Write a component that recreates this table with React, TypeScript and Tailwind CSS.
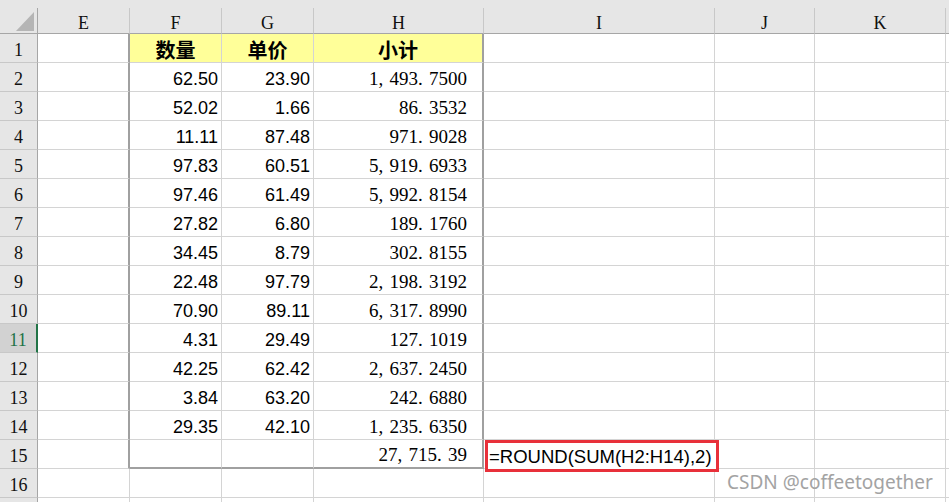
import React from "react";

const cols = ["E", "F", "G", "H", "I", "J", "K", ""];

const data: string[][] = [
  ["62.50", "23.90", "1,493.7500"],
  ["52.02", "1.66", "86.3532"],
  ["11.11", "87.48", "971.9028"],
  ["97.83", "60.51", "5,919.6933"],
  ["97.46", "61.49", "5,992.8154"],
  ["27.82", "6.80", "189.1760"],
  ["34.45", "8.79", "302.8155"],
  ["22.48", "97.79", "2,198.3192"],
  ["70.90", "89.11", "6,317.8990"],
  ["4.31", "29.49", "127.1019"],
  ["42.25", "62.42", "2,637.2450"],
  ["3.84", "63.20", "242.6880"],
  ["29.35", "42.10", "1,235.6350"],
  ["", "", "27,715.39"],
];

const gridCols =
  "grid grid-cols-[38px_92px_92px_92px_170px_231px_100px_131px_3px]";
const sans = "font-['Liberation_Sans',Arial,sans-serif]";
const serif = "font-['Liberation_Serif','Times_New_Roman',serif]";
const cell =
  "h-[29px] pt-[4px] border-r border-b border-[#d4d4d4] flex items-center";

// SimSun-style number: punctuation takes a wider slot
const SongNumber: React.FC<{ value: string }> = ({ value }) => (
  <span className={`${serif} text-[19px] text-black`}>
    {value.split("").map((ch, i) =>
      ch === "," || ch === "." ? (
        <span key={i} className="inline-block w-[11px]">
          {ch}
        </span>
      ) : (
        <span key={i}>{ch}</span>
      )
    )}
  </span>
);

const RowHeader: React.FC<{ n: number; label: boolean }> = ({ n, label }) => {
  const active = n === 11;
  return (
    <div
      className={`h-[29px] pt-[4px] border-b border-[#c8c8c8] flex items-center justify-center ${serif} text-[18px] ${
        active
          ? "bg-[#d2d2d2] text-[#217346] border-r-2 border-r-[#217346]"
          : "bg-[#e6e6e6] text-[#111] border-r border-r-[#a6a6a6]"
      }`}
    >
      {label ? n : ""}
    </div>
  );
};

const App: React.FC = () => {
  const rowCount = 17;
  return (
    <div className="w-[949px] h-[502px] overflow-hidden bg-white relative">
      <div className="h-[8px] bg-[#e6e6e6]" />
      {/* column headers */}
      <div className={gridCols}>
        <div className="h-[26px] bg-[#e6e6e6] border-r border-b border-[#a6a6a6] relative">
          <svg
            className="absolute left-[16px] top-[4px]"
            width="18"
            height="19"
            viewBox="0 0 18 19"
          >
            <polygon points="18,0 18,19 0,19" fill="#b5b5b5" />
          </svg>
        </div>
        {cols.map((c, i) => (
          <div
            key={i}
            className={`h-[26px] pt-[6px] bg-[#e6e6e6] border-b border-b-[#a6a6a6] ${
              c ? "border-r border-r-[#c8c8c8]" : ""
            } flex items-center justify-center ${serif} text-[18px] text-[#111]`}
          >
            {c}
          </div>
        ))}
      </div>

      {/* rows */}
      {Array.from({ length: rowCount }, (_, r) => {
        const n = r + 1;
        const inTable = n <= 15;
        const isHead = n === 1;
        const vals = n >= 2 && n <= 15 ? data[n - 2] : null;
        const last = n === 15;
        return (
          <div key={n} className={gridCols}>
            <RowHeader n={n} label={n <= 16} />
            {/* E */}
            <div
              className={`${cell} ${
                inTable ? "border-r-2 border-r-[#a0a0a0]" : ""
              }`}
            />
            {/* F, G */}
            {[0, 1].map((k) => (
              <div
                key={k}
                className={`${cell} ${
                  isHead ? "bg-[#ffff99] justify-center" : "justify-end pr-[3px]"
                } ${last ? "border-b-2 border-b-[#a0a0a0]" : ""}`}
              >
                {isHead ? (
                  <span className="font-['Noto_Sans_CJK_SC',sans-serif] font-bold text-[20px] leading-none text-black">
                    {k === 0 ? "数量" : "单价"}
                  </span>
                ) : (
                  vals && (
                    <span className={`${sans} text-[18px] text-black`}>
                      {vals[k]}
                    </span>
                  )
                )}
              </div>
            ))}
            {/* H */}
            <div
              className={`${cell} ${
                isHead ? "bg-[#ffff99] justify-center" : "justify-end pr-[15px]"
              } ${inTable ? "border-r-2 border-r-[#a0a0a0]" : ""} ${
                last ? "border-b-2 border-b-[#a0a0a0]" : ""
              }`}
            >
              {isHead ? (
                <span className="font-['Noto_Sans_CJK_SC',sans-serif] font-bold text-[20px] leading-none text-black">
                  小计
                </span>
              ) : (
                vals && <SongNumber value={vals[2]} />
              )}
            </div>
            {/* I, J, K */}
            <div className={cell} />
            <div className={cell} />
            <div className={cell} />
            <div className="h-[29px] border-b border-[#d4d4d4]" />
          </div>
        );
      })}

      {/* formula annotation over I15 */}
      <div
        className={`absolute left-[485px] top-[440px] w-[234px] h-[32px] border-[3px] border-[#e8303a] bg-white flex items-center pl-[1px] pt-[1px] ${sans} text-[18.5px] text-black whitespace-nowrap overflow-hidden`}
      >
        =ROUND(SUM(H2:H14),2)
      </div>

      {/* watermark */}
      <div className="absolute left-[727px] top-[468px] font-['Noto_Sans',sans-serif] text-[19px] text-[#a3a3a3] whitespace-nowrap">
        CSDN @coffeetogether
      </div>
    </div>
  );
};

export default App;
